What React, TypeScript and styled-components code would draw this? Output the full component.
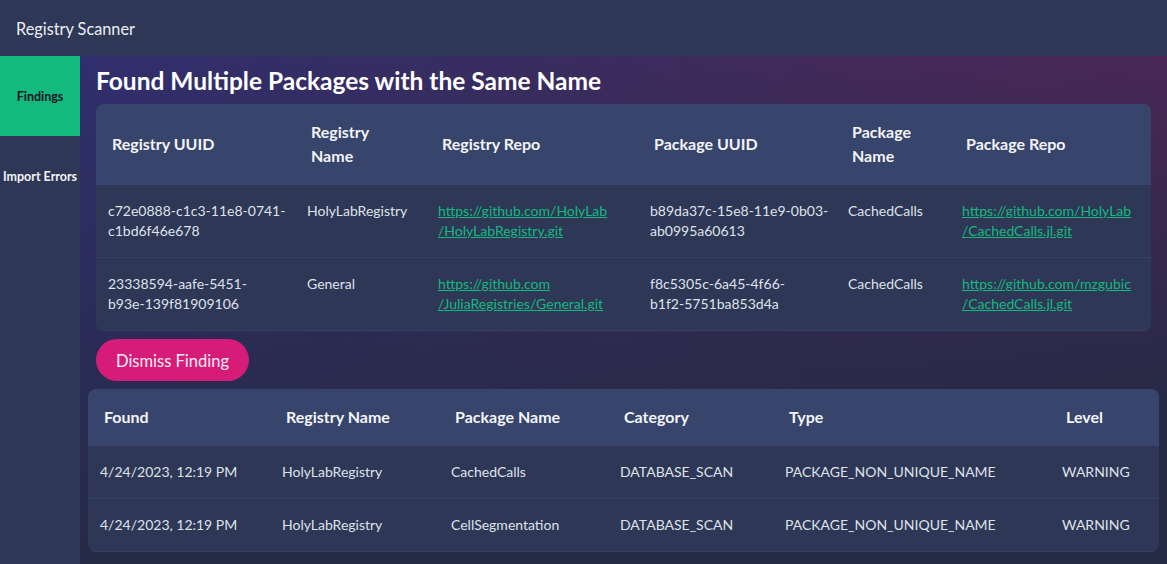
import React from "react";
import styled, { createGlobalStyle } from "styled-components";

const GlobalStyle = createGlobalStyle`
  html, body { margin: 0; padding: 0; }
  body {
    font-family: Lato, "Noto Sans", sans-serif;
    background: #2e3756;
    color: #e6e8f0;
  }
  * { box-sizing: border-box; }
`;

const Page = styled.div`
  width: 1167px;
  height: 564px;
  display: flex;
  flex-direction: column;
  overflow: hidden;
`;

const TopBar = styled.header`
  height: 56px;
  flex: none;
  display: flex;
  align-items: center;
  padding: 1px 16px 0;
  background: #2e3756;
  font-size: 16.3px;
  color: #eceef4;
`;

const Body = styled.div`
  flex: 1;
  display: flex;
  min-height: 0;
`;

const Sidebar = styled.nav`
  width: 80px;
  flex: none;
  display: flex;
  flex-direction: column;
  background: #2e3756;
`;

const NavItem = styled.div<{ $active?: boolean }>`
  height: 80px;
  display: flex;
  align-items: center;
  justify-content: center;
  font-size: 12.5px;
  font-weight: 700;
  white-space: nowrap;
  background: ${(p) => (p.$active ? "#14b97e" : "transparent")};
  color: ${(p) => (p.$active ? "#10151f" : "#f2f3f7")};
`;

const Main = styled.main`
  flex: 1;
  padding: 8px;
  display: flex;
  flex-direction: column;
  gap: 8px;
  background:
    linear-gradient(172deg, rgba(37, 42, 69, 0) 0%, rgba(37, 42, 69, 0.5) 38%, #252a45 78%),
    linear-gradient(90deg, #302f6e 0%, #3b2d64 40%, #5a265c 100%);
`;

const FindingSection = styled.section`
  padding: 0 8px;
  display: flex;
  flex-direction: column;
  align-items: flex-start;
  gap: 8px;
`;

const Title = styled.h1`
  margin: 0;
  font-size: 24.5px;
  line-height: 33px;
  font-weight: 700;
  color: #ffffff;
  margin-bottom: -1px;
`;

const Card = styled.div`
  width: 100%;
  border-radius: 8px;
  overflow: hidden;
  background: #2e3756;
`;

const Table = styled.table`
  width: 100%;
  border-collapse: collapse;
  table-layout: fixed;
`;

const Col = styled.col<{ $w: number }>`
  width: ${(p) => p.$w}px;
`;

const HeadRow = styled.tr`
  background: #37446b;
`;

const Th = styled.th`
  padding: 16px;
  text-align: left;
  vertical-align: middle;
  font-size: 16px;
  line-height: 24px;
  font-weight: 700;
  color: #f3f4f8;
  border-bottom: 1px solid #3a4670;
`;

const Row = styled.tr`
  background: #2e3756;
  & td { border-bottom: 1px solid #364169; }
`;

const Td = styled.td`
  padding: 16px 12px;
  vertical-align: top;
  font-size: 14px;
  line-height: 20px;
  color: #dfe2ea;
`;

const Line = styled.span`
  display: block;
  white-space: nowrap;
`;

const RepoLink = styled.a`
  color: #14b97e;
  text-decoration: underline;
`;

const Button = styled.button`
  height: 42px;
  padding: 1px 20px 0;
  border: none;
  border-radius: 21px;
  background: #d61b78;
  color: #fbeef5;
  font-family: inherit;
  font-size: 16.5px;
  cursor: pointer;
`;

const Link = ({ url }: { url: string }) => {
  const m = url.match(/^(https:\/\/[^/]+)(.*)$/);
  const host = m ? m[1] : url;
  const rest = m ? m[2] : "";
  const parts = rest.split("/").filter(Boolean);
  return (
    <RepoLink href={url}>
      {host}
      {parts.map((p, i) => (
        <React.Fragment key={i}>
          <wbr />/{p}
        </React.Fragment>
      ))}
    </RepoLink>
  );
};

const Uuid = ({ lines }: { lines: string[] }) => (
  <>
    {lines.map((l) => (
      <Line key={l}>{l}</Line>
    ))}
  </>
);

const findings = [
  {
    regUuid: ["c72e0888-c1c3-11e8-0741-", "c1bd6f46e678"],
    regName: "HolyLabRegistry",
    regRepo: "https://github.com/HolyLab/HolyLabRegistry.git",
    pkgUuid: ["b89da37c-15e8-11e9-0b03-", "ab0995a60613"],
    pkgName: "CachedCalls",
    pkgRepo: "https://github.com/HolyLab/CachedCalls.jl.git",
  },
  {
    regUuid: ["23338594-aafe-5451-", "b93e-139f81909106"],
    regName: "General",
    regRepo: "https://github.com/JuliaRegistries/General.git",
    pkgUuid: ["f8c5305c-6a45-4f66-", "b1f2-5751ba853d4a"],
    pkgName: "CachedCalls",
    pkgRepo: "https://github.com/mzgubic/CachedCalls.jl.git",
  },
];

const summary = [
  { found: "4/24/2023, 12:19 PM", reg: "HolyLabRegistry", pkg: "CachedCalls" },
  { found: "4/24/2023, 12:19 PM", reg: "HolyLabRegistry", pkg: "CellSegmentation" },
];

export default function App() {
  return (
    <Page>
      <GlobalStyle />
      <TopBar>Registry Scanner</TopBar>
      <Body>
        <Sidebar>
          <NavItem $active>Findings</NavItem>
          <NavItem>Import Errors</NavItem>
        </Sidebar>
        <Main>
          <FindingSection>
            <Title>Found Multiple Packages with the Same Name</Title>
            <Card>
              <Table>
                <colgroup>
                  <Col $w={199} />
                  <Col $w={131} />
                  <Col $w={212} />
                  <Col $w={198} />
                  <Col $w={114} />
                  <Col $w={201} />
                </colgroup>
                <thead>
                  <HeadRow>
                    <Th>Registry UUID</Th>
                    <Th>Registry Name</Th>
                    <Th>Registry Repo</Th>
                    <Th>Package UUID</Th>
                    <Th>Package Name</Th>
                    <Th>Package Repo</Th>
                  </HeadRow>
                </thead>
                <tbody>
                  {findings.map((f) => (
                    <Row key={f.regRepo}>
                      <Td><Uuid lines={f.regUuid} /></Td>
                      <Td>{f.regName}</Td>
                      <Td><Link url={f.regRepo} /></Td>
                      <Td><Uuid lines={f.pkgUuid} /></Td>
                      <Td>{f.pkgName}</Td>
                      <Td><Link url={f.pkgRepo} /></Td>
                    </Row>
                  ))}
                </tbody>
              </Table>
            </Card>
            <Button>Dismiss Finding</Button>
          </FindingSection>
          <Card>
            <Table>
              <colgroup>
                <Col $w={182} />
                <Col $w={169} />
                <Col $w={169} />
                <Col $w={165} />
                <Col $w={277} />
                <Col $w={109} />
              </colgroup>
              <thead>
                <HeadRow>
                  <Th>Found</Th>
                  <Th>Registry Name</Th>
                  <Th>Package Name</Th>
                  <Th>Category</Th>
                  <Th>Type</Th>
                  <Th>Level</Th>
                </HeadRow>
              </thead>
              <tbody>
                {summary.map((s) => (
                  <Row key={s.pkg}>
                    <Td>{s.found}</Td>
                    <Td>{s.reg}</Td>
                    <Td>{s.pkg}</Td>
                    <Td>DATABASE_SCAN</Td>
                    <Td>PACKAGE_NON_UNIQUE_NAME</Td>
                    <Td>WARNING</Td>
                  </Row>
                ))}
              </tbody>
            </Table>
          </Card>
        </Main>
      </Body>
    </Page>
  );
}
